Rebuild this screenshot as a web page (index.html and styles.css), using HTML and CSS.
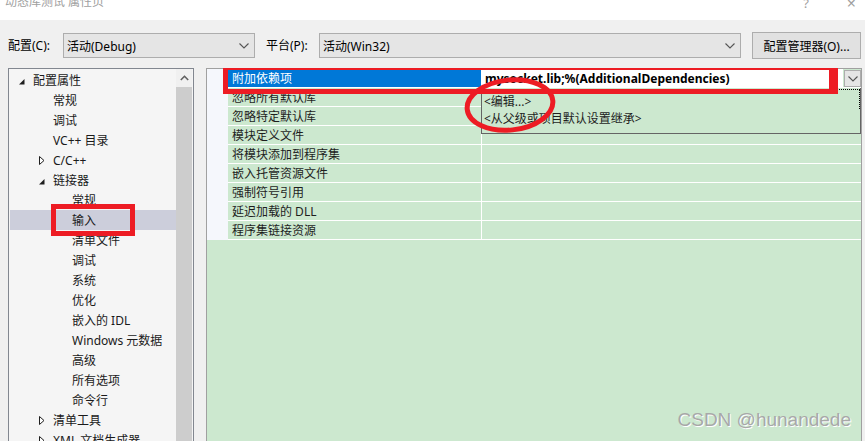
FILE: index.html
```html
<!DOCTYPE html>
<html lang="zh-CN">

<head>
    <meta charset="UTF-8">
    <meta name="viewport" content="width=device-width, initial-scale=1.0">
    <title>动态库测试 属性页</title>
    <link rel="stylesheet" href="styles.css">
</head>

<body>
    <div class="titlebar">
        <span class="title">动态库测试 属性页</span>
        <span class="title-btn help">?</span>
        <span class="title-btn close">×</span>
    </div>

    <div class="toolbar">
        <span class="tb-label">配置(C):</span>
        <div class="combo combo-config">
            <span>活动(Debug)</span>
            <svg class="chev" width="10" height="6" viewBox="0 0 10 6"><path d="M0.5 0.5 L5 5 L9.5 0.5" /></svg>
        </div>
        <span class="tb-label tb-platform">平台(P):</span>
        <div class="combo combo-platform">
            <span>活动(Win32)</span>
            <svg class="chev" width="10" height="6" viewBox="0 0 10 6"><path d="M0.5 0.5 L5 5 L9.5 0.5" /></svg>
        </div>
        <button class="btn">配置管理器(O)...</button>
    </div>

    <div class="main">
        <div class="tree">
            <ul class="tree-list">
                <li class="lv0"><span class="arrow"><svg width="6" height="6" viewBox="0 0 6 6" class="open"><polygon points="5.5,0 5.5,5.5 0,5.5" /></svg></span>配置属性</li>
                <li class="lv1"><span class="arrow"></span>常规</li>
                <li class="lv1"><span class="arrow"></span>调试</li>
                <li class="lv1"><span class="arrow"></span>VC++ 目录</li>
                <li class="lv1"><span class="arrow"><svg width="6" height="9" viewBox="0 0 6 9" class="closed"><polygon points="0.5,0.5 5,4.5 0.5,8.5" /></svg></span>C/C++</li>
                <li class="lv1"><span class="arrow"><svg width="6" height="6" viewBox="0 0 6 6" class="open"><polygon points="5.5,0 5.5,5.5 0,5.5" /></svg></span>链接器</li>
                <li class="lv2"><span class="arrow"></span>常规</li>
                <li class="lv2 selected"><span class="arrow"></span>输入</li>
                <li class="lv2"><span class="arrow"></span>清单文件</li>
                <li class="lv2"><span class="arrow"></span>调试</li>
                <li class="lv2"><span class="arrow"></span>系统</li>
                <li class="lv2"><span class="arrow"></span>优化</li>
                <li class="lv2"><span class="arrow"></span>嵌入的 IDL</li>
                <li class="lv2"><span class="arrow"></span>Windows 元数据</li>
                <li class="lv2"><span class="arrow"></span>高级</li>
                <li class="lv2"><span class="arrow"></span>所有选项</li>
                <li class="lv2"><span class="arrow"></span>命令行</li>
                <li class="lv1"><span class="arrow"><svg width="6" height="9" viewBox="0 0 6 9" class="closed"><polygon points="0.5,0.5 5,4.5 0.5,8.5" /></svg></span>清单工具</li>
                <li class="lv1"><span class="arrow"><svg width="6" height="9" viewBox="0 0 6 9" class="closed"><polygon points="0.5,0.5 5,4.5 0.5,8.5" /></svg></span>XML 文档生成器</li>
            </ul>
            <div class="scrollbar">
                <div class="sb-up">
                    <svg width="9" height="6" viewBox="0 0 9 6"><path d="M0.8 5 L4.5 1.3 L8.2 5" /></svg>
                </div>
                <div class="sb-thumb"></div>
            </div>
            <div class="mark-box mark-tree"></div>
        </div>

        <div class="props">
            <div class="grid">
                <div class="gutter"></div>
                <div class="rows">
                    <div class="row selected">
                        <div class="name">附加依赖项</div>
                        <div class="value">
                            <div class="edit">mysocket.lib;%(AdditionalDependencies)</div>
                            <div class="drop-btn">
                                <svg width="10" height="6" viewBox="0 0 10 6"><path d="M0.5 0.5 L5 5 L9.5 0.5" /></svg>
                            </div>
                        </div>
                    </div>
                    <div class="row"><div class="name">忽略所有默认库</div><div class="value"></div></div>
                    <div class="row"><div class="name">忽略特定默认库</div><div class="value"></div></div>
                    <div class="row"><div class="name">模块定义文件</div><div class="value"></div></div>
                    <div class="row"><div class="name">将模块添加到程序集</div><div class="value"></div></div>
                    <div class="row"><div class="name">嵌入托管资源文件</div><div class="value"></div></div>
                    <div class="row"><div class="name">强制符号引用</div><div class="value"></div></div>
                    <div class="row"><div class="name">延迟加载的 DLL</div><div class="value"></div></div>
                    <div class="row"><div class="name">程序集链接资源</div><div class="value"></div></div>
                </div>
            </div>

            <div class="dropdown">
                <div class="drop-item focused">&lt;编辑...&gt;</div>
                <div class="drop-item">&lt;从父级或项目默认设置继承&gt;</div>
            </div>

            <div class="mark-box mark-grid"></div>
            <svg class="mark-ellipse" width="100" height="60" viewBox="0 0 100 60">
                <ellipse cx="48" cy="29" rx="43" ry="25" transform="rotate(-6 48 29)" />
            </svg>

            <div class="watermark">CSDN @hunandede</div>
        </div>
    </div>
</body>

</html>
```

FILE: styles.css
```css
body {
    margin: 0;
    padding: 0;
    width: 865px;
    height: 441px;
    overflow: hidden;
    background-color: #f0f0f0;
    font-family: 'Noto Sans', 'Noto Sans CJK SC', sans-serif;
    font-size: 12px;
    color: #000;
}

.titlebar {
    height: 20px;
    background-color: #fff;
    display: flex;
    overflow: hidden;
    color: #a0a0a0;
}

.title {
    margin-left: 5px;
    margin-top: -4px;
    line-height: 12px;
    flex: 1;
}

.title-btn {
    line-height: 12px;
    margin-top: -3px;
    font-size: 13px;
}

.help {
    margin-right: 38px;
}

.close {
    margin-right: 9px;
    font-size: 16px;
}

.toolbar {
    height: 48px;
    box-sizing: border-box;
    padding-top: 13px;
    display: flex;
    align-items: flex-start;
}

.tb-label {
    line-height: 25px;
    margin-left: 8px;
    width: 55px;
}

.tb-platform {
    margin-left: 11px;
    width: 53px;
}

.combo {
    height: 25px;
    box-sizing: border-box;
    border: 1px solid #adadad;
    background-color: #e5e5e5;
    display: flex;
    align-items: center;
    justify-content: space-between;
    padding: 0 5px 0 3px;
}

.combo-config {
    width: 192px;
}

.combo-platform {
    width: 422px;
}

.chev path,
.drop-btn path {
    fill: none;
    stroke: #555;
    stroke-width: 1.1;
}

.btn {
    margin-left: 11px;
    margin-top: -1px;
    width: 109px;
    height: 27px;
    border: 1px solid #adadad;
    background-color: #e1e1e1;
    font-family: inherit;
    font-size: 12px;
    color: #000;
    padding: 0;
}

.main {
    display: flex;
    align-items: flex-start;
    height: 373px;
    overflow: hidden;
}

.tree {
    position: relative;
    margin-left: 8px;
    width: 186px;
    height: 400px;
    box-sizing: border-box;
    border: 1px solid #828790;
    background-color: #f5f5f5;
    display: flex;
}

.tree-list {
    list-style: none;
    margin: 0;
    padding: 1px 0 0 1px;
    flex: 1;
}

.tree-list li {
    height: 20px;
    line-height: 20px;
    padding-top: 1px;
    box-sizing: border-box;
    white-space: nowrap;
    color: #1a1a1a;
    display: flex;
    align-items: center;
}

.tree-list .lv0 {
    padding-left: 9px;
}

.tree-list .lv1 {
    padding-left: 29px;
}

.tree-list .lv2 {
    padding-left: 48px;
}

.tree-list li.selected {
    background-color: #cccedb;
}

.arrow {
    width: 14px;
    height: 19px;
    display: flex;
    align-items: center;
    flex-shrink: 0;
}

.arrow .open {
    margin-top: 2px;
}

.arrow .open polygon {
    fill: #1e1e1e;
}

.arrow .closed polygon {
    fill: #fff;
    stroke: #1e1e1e;
    stroke-width: 1;
}

.scrollbar {
    width: 16px;
    margin-right: 1px;
    background-color: #f0f0f0;
    display: flex;
    flex-direction: column;
}

.sb-up {
    height: 18px;
    display: flex;
    align-items: center;
    justify-content: center;
}

.sb-up path {
    fill: none;
    stroke: #606060;
    stroke-width: 1.6;
}

.sb-thumb {
    flex: 1;
    background-color: #cdcdcd;
}

.mark-box {
    position: absolute;
    box-sizing: border-box;
    border: 5px solid #ed1c24;
}

.mark-tree {
    left: 42px;
    top: 135px;
    width: 84px;
    height: 32px;
}

.props {
    position: relative;
    margin-left: 12px;
    width: 656px;
    height: 400px;
    box-sizing: border-box;
    border: 1px solid #a0a0a0;
    background-color: #cce8cf;
}

.grid {
    display: flex;
}

.gutter {
    width: 21px;
    background-color: #f5f7fc;
}

.rows {
    flex: 1;
}

.row {
    display: flex;
    height: 19px;
    box-sizing: border-box;
    border-bottom: 1px solid #fff;
    color: #1e1e1e;
}

.name {
    width: 253px;
    padding-left: 4px;
    box-sizing: border-box;
    line-height: 20px;
    white-space: nowrap;
}

.value {
    flex: 1;
    border-left: 1px solid #fff;
    display: flex;
}

.row.selected .name {
    background-color: #0078d7;
    color: #fff;
}

.edit {
    flex: 1;
    background-color: #fff;
    font-weight: bold;
    color: #000;
    line-height: 20px;
    height: 18px;
    padding-left: 3px;
    white-space: nowrap;
    overflow: hidden;
}

.drop-btn {
    width: 17px;
    margin: 1px 0 0 1px;
    box-sizing: border-box;
    border: 1px solid #adadad;
    background-color: #e5e5e5;
    display: flex;
    align-items: center;
    justify-content: center;
}

.dropdown {
    position: absolute;
    left: 274px;
    top: 19px;
    width: 380px;
    height: 46px;
    box-sizing: border-box;
    border: 1px solid #646464;
    border-top: none;
    background-color: #cce8cf;
    padding-top: 4px;
}

.drop-item {
    height: 17px;
    line-height: 19px;
    padding-left: 2px;
    color: #1e1e1e;
    box-sizing: border-box;
}

.drop-item.focused {
    border-top: 1px dotted #000;
    border-right: 1px dotted #000;
    margin-top: -3px;
    height: 20px;
    padding-top: 2px;
}

.mark-grid {
    left: 16px;
    top: -4px;
    width: 615px;
    height: 29px;
    border-right-width: 9px;
}

.mark-ellipse {
    position: absolute;
    left: 255px;
    top: 7px;
}

.mark-ellipse ellipse {
    fill: none;
    stroke: #ed1c24;
    stroke-width: 5;
}

.watermark {
    position: absolute;
    right: 10px;
    top: 340px;
    font-family: 'Liberation Sans', Arial, sans-serif;
    font-size: 19px;
    color: #a8a8a8;
    text-shadow: 1px 1px 0 #fff;
}
```
